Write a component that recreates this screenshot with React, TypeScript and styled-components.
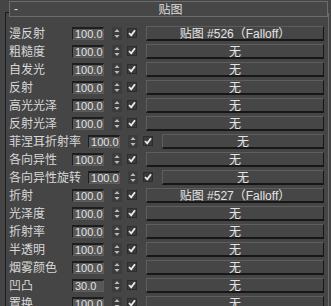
import React from "react";
import styled, { createGlobalStyle } from "styled-components";

const GlobalStyle = createGlobalStyle`
    html, body {
        margin: 0;
        padding: 0;
        background: #454545;
    }
    body {
        font-family: "Liberation Sans", "Noto Sans CJK SC", sans-serif;
        color: #d8d8d8;
    }
`;

const Panel = styled.section`
    position: relative;
    width: 331px;
    height: 306px;
    overflow: hidden;
    background: #454545;
    &::before {
        content: "";
        position: absolute;
        top: 12px;
        left: 5px;
        right: 2px;
        bottom: -2px;
        border-top: 1px solid #1c1c1c;
        border-left: 1px solid #1c1c1c;
        border-right: 1px solid #6a6a6a;
    }
`;

const Header = styled.header`
    position: relative;
    margin: 1px 3px 0 9px;
    height: 14px;
    border: 1px solid #6c6c6c;
    background: #474747;
    display: flex;
    align-items: center;
    font-size: 12px;
    color: #dedede;
`;

const Collapse = styled.span`
    width: 0;
    padding-left: 4px;
    font-family: "Liberation Sans", sans-serif;
`;

const HeaderTitle = styled.span`
    flex: 1;
    text-align: center;
    font-family: "Noto Sans CJK SC", sans-serif;
    line-height: 14px;
`;

const RowList = styled.div`
    position: relative;
    display: flex;
    flex-direction: column;
    padding: 7px 7px 0 9px;
`;

const Row = styled.div`
    display: flex;
    align-items: center;
    height: 18px;
`;

const Label = styled.span`
    flex: none;
    min-width: 63px;
    padding-right: 7px;
    box-sizing: border-box;
    font-family: "Noto Sans CJK SC", sans-serif;
    font-size: 12px;
    line-height: 18px;
    color: #d8d8d8;
    white-space: nowrap;
`;

const ValueBox = styled.span`
    flex: none;
    width: 32px;
    height: 13px;
    box-sizing: border-box;
    border-style: solid;
    border-width: 2px 1px 1px 1px;
    border-color: #1e1e1e #5c5c5c #5c5c5c #1e1e1e;
    background: #575757;
    font-family: "Liberation Sans", sans-serif;
    font-size: 11px;
    line-height: 10px;
    padding-left: 2px;
    color: #e2e2e2;
`;

const Spinner = styled.span`
    flex: none;
    margin-left: 8px;
    width: 10px;
    height: 13px;
    display: flex;
    background: #3c3c3c;
    svg {
        display: block;
    }
`;

const CheckBox = styled.span`
    flex: none;
    margin-left: 5px;
    width: 10px;
    height: 10px;
    box-sizing: border-box;
    border: 1px solid #2c2c2c;
    background: #3a3a3a;
    svg {
        display: block;
    }
`;

const MapButton = styled.div`
    flex: 1;
    margin-left: 9px;
    height: 15px;
    box-sizing: border-box;
    border-style: solid;
    border-width: 1px 1px 2px 1px;
    border-color: #5e5e5e #171717 #171717 #5e5e5e;
    background: #464646;
    display: flex;
    align-items: center;
    justify-content: center;
    font-family: "Liberation Sans", "Noto Sans CJK SC", sans-serif;
    font-size: 12px;
    color: #e4e4e4;
    white-space: nowrap;
`;

const SpinArrows = () => (
    <svg width="10" height="13" viewBox="0 0 10 13">
        <polygon points="2.5,5 5,2 7.5,5" fill="#bdbdbd" />
        <polygon points="2.5,8 5,11 7.5,8" fill="#bdbdbd" />
    </svg>
);

const Check = () => (
    <svg width="8" height="8" viewBox="0 0 8 8">
        <path
            d="M1 4 L3.2 6.3 L7 1.2"
            fill="none"
            stroke="#ececec"
            strokeWidth="1.8"
        />
    </svg>
);

type MapRow = {
    label: string;
    value: string;
    map: string;
};

const rows: MapRow[] = [
    { label: "漫反射", value: "100.0", map: "贴图 #526（Falloff）" },
    { label: "粗糙度", value: "100.0", map: "无" },
    { label: "自发光", value: "100.0", map: "无" },
    { label: "反射", value: "100.0", map: "无" },
    { label: "高光光泽", value: "100.0", map: "无" },
    { label: "反射光泽", value: "100.0", map: "无" },
    { label: "菲涅耳折射率", value: "100.0", map: "无" },
    { label: "各向异性", value: "100.0", map: "无" },
    { label: "各向异性旋转", value: "100.0", map: "无" },
    { label: "折射", value: "100.0", map: "贴图 #527（Falloff）" },
    { label: "光泽度", value: "100.0", map: "无" },
    { label: "折射率", value: "100.0", map: "无" },
    { label: "半透明", value: "100.0", map: "无" },
    { label: "烟雾颜色", value: "100.0", map: "无" },
    { label: "凹凸", value: "30.0", map: "无" },
    { label: "置换", value: "100.0", map: "无" },
];

const App = () => {
    return (
        <>
            <GlobalStyle />
            <Panel>
                <Header>
                    <Collapse>-</Collapse>
                    <HeaderTitle>贴图</HeaderTitle>
                </Header>
                <RowList>
                    {rows.map((row, index) => (
                        <Row key={index}>
                            <Label>{row.label}</Label>
                            <ValueBox>{row.value}</ValueBox>
                            <Spinner>
                                <SpinArrows />
                            </Spinner>
                            <CheckBox>
                                <Check />
                            </CheckBox>
                            <MapButton>{row.map}</MapButton>
                        </Row>
                    ))}
                </RowList>
            </Panel>
        </>
    );
};

export default App;
